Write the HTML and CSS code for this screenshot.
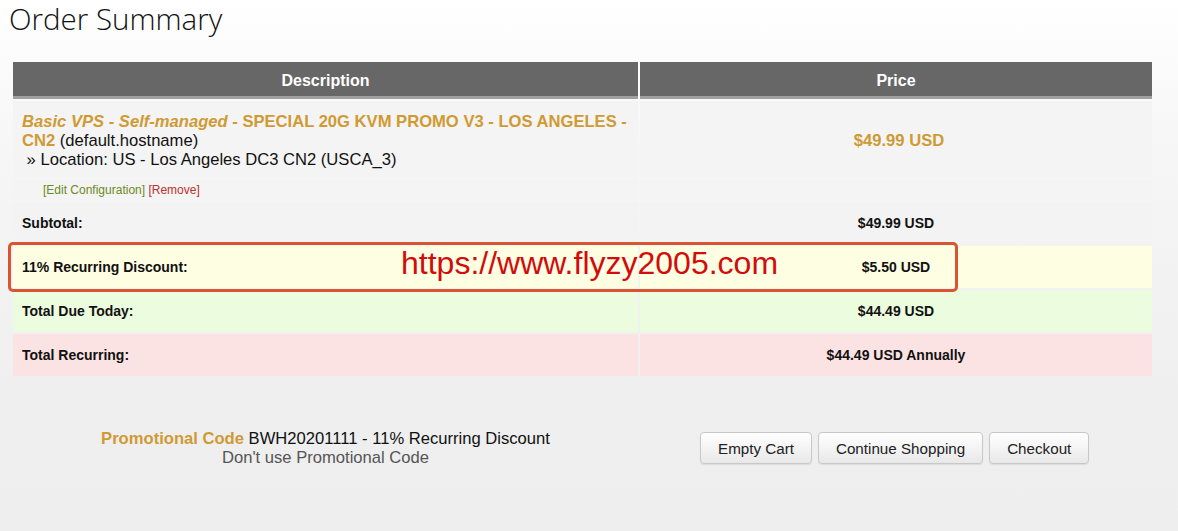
FILE: index.html
```html
<!DOCTYPE html>
<html lang="en">

<head>
    <meta charset="UTF-8">
    <meta name="viewport" content="width=device-width, initial-scale=1.0">
    <title>Order Summary</title>
    <link rel="stylesheet" href="styles.css">
</head>

<body>
    <h1 class="page-title">Order Summary</h1>

    <div class="cart">
        <table class="summary">
            <thead>
                <tr>
                    <th class="col-desc">Description</th>
                    <th class="col-price">Price</th>
                </tr>
            </thead>
            <tbody>
                <tr class="item">
                    <td>
                        <span class="product"><em>Basic VPS - Self-managed</em> - SPECIAL 20G KVM PROMO V3 - LOS ANGELES - CN2</span> (default.hostname)<br>
                        &nbsp;&raquo; Location: US - Los Angeles DC3 CN2 (USCA_3)
                    </td>
                    <td class="price item-price">$49.99 USD</td>
                </tr>
                <tr class="actions">
                    <td><a class="edit" href="#">[Edit Configuration]</a> <a class="remove" href="#">[Remove]</a></td>
                    <td></td>
                </tr>
                <tr class="total subtotal">
                    <td>Subtotal:</td>
                    <td class="price">$49.99 USD</td>
                </tr>
                <tr class="total discount">
                    <td>11% Recurring Discount:</td>
                    <td class="price">$5.50 USD</td>
                </tr>
                <tr class="total due">
                    <td>Total Due Today:</td>
                    <td class="price">$44.49 USD</td>
                </tr>
                <tr class="total recurring">
                    <td>Total Recurring:</td>
                    <td class="price">$44.49 USD Annually</td>
                </tr>
            </tbody>
        </table>

        <!-- watermark box drawn over the discount row -->
        <div class="mark">https://www.flyzy2005.com</div>
    </div>

    <div class="cart-footer">
        <div class="promo">
            <div><span class="promo-label">Promotional Code</span> BWH20201111 - 11% Recurring Discount</div>
            <div class="promo-remove">Don't use Promotional Code</div>
        </div>
        <div class="buttons">
            <button class="btn">Empty Cart</button>
            <button class="btn">Continue Shopping</button>
            <button class="btn">Checkout</button>
        </div>
    </div>
</body>

</html>
```

FILE: styles.css
```css
html {
    background: linear-gradient(#ffffff 0px, #f6f6f6 150px, #efefef 400px, #eeeeee 531px);
    min-height: 100%;
}

body {
    margin: 0;
    font-family: "Liberation Sans", Arial, sans-serif;
    color: #111;
}

.page-title {
    margin: 0 0 22px 9px;
    font-family: "Open Sans", sans-serif;
    font-weight: 300;
    font-size: 29.5px;
    line-height: 38px;
    color: #111;
}

.cart {
    position: relative;
}

table.summary {
    table-layout: fixed;
    width: 1143px;
    margin-left: 11px;
    border-collapse: separate;
    border-spacing: 2px;
}

.summary th {
    background-color: #676767;
    color: #fff;
    font-size: 16px;
    font-weight: bold;
    height: 37px;
    padding: 3px 0 0;
    border-bottom: 3px solid #a0a0a0;
    box-sizing: border-box;
}

.summary th.col-desc {
    width: 625px;
}

.summary td {
    background-color: #f4f4f4;
    padding: 0 9px;
}

.item td {
    font-size: 16.6px;
    line-height: 19px;
    padding-top: 11px;
    padding-bottom: 8px;
    padding-right: 3px;
}

.product {
    color: #d09a33;
    font-weight: bold;
}

.product em {
    font-style: italic;
}

.price {
    text-align: center;
    font-size: 14px;
    font-weight: bold;
}

.item td.item-price {
    color: #d09a33;
    font-size: 16.6px;
}

.actions td {
    height: 20px;
    padding: 1px 0 0 30px;
    font-size: 12px;
}

.actions a {
    text-decoration: none;
}

a.edit {
    color: #6b8a23;
}

a.remove {
    color: #c0302a;
}

.total td {
    height: 42px;
    font-size: 14px;
    font-weight: bold;
}

.subtotal td {
    background-color: #f3f3f3;
}

.discount td {
    background-color: #fefee3;
}

.due td {
    background-color: #ecfcdf;
}

.recurring td {
    background-color: #fbe2e3;
}

.mark {
    position: absolute;
    left: 8px;
    top: 182px;
    width: 950px;
    height: 50px;
    box-sizing: border-box;
    border: 3px solid #da5430;
    border-radius: 5px;
    padding: 0 0 8px 390px;
    display: flex;
    align-items: center;
    color: #d40b0b;
    font-size: 32px;
    line-height: 1;
}

.cart-footer {
    display: flex;
    align-items: center;
    margin-top: 51px;
}

.promo {
    width: 651px;
    text-align: center;
    font-size: 16.6px;
    line-height: 19px;
}

.promo-label {
    color: #d09a33;
    font-weight: bold;
}

.promo-remove {
    color: #555;
}

.buttons {
    display: flex;
    gap: 6px;
    margin-left: 49px;
}

.btn {
    height: 32px;
    padding: 0 17px;
    font-family: "Liberation Sans", Arial, sans-serif;
    font-size: 15.2px;
    color: #222;
    background: linear-gradient(#ffffff, #e8e8e8);
    border: 1px solid #c8c8c8;
    border-radius: 4px;
    box-shadow: 0 1px 1px rgba(0, 0, 0, 0.08);
}

.btn:hover {
    cursor: pointer;
}
```
